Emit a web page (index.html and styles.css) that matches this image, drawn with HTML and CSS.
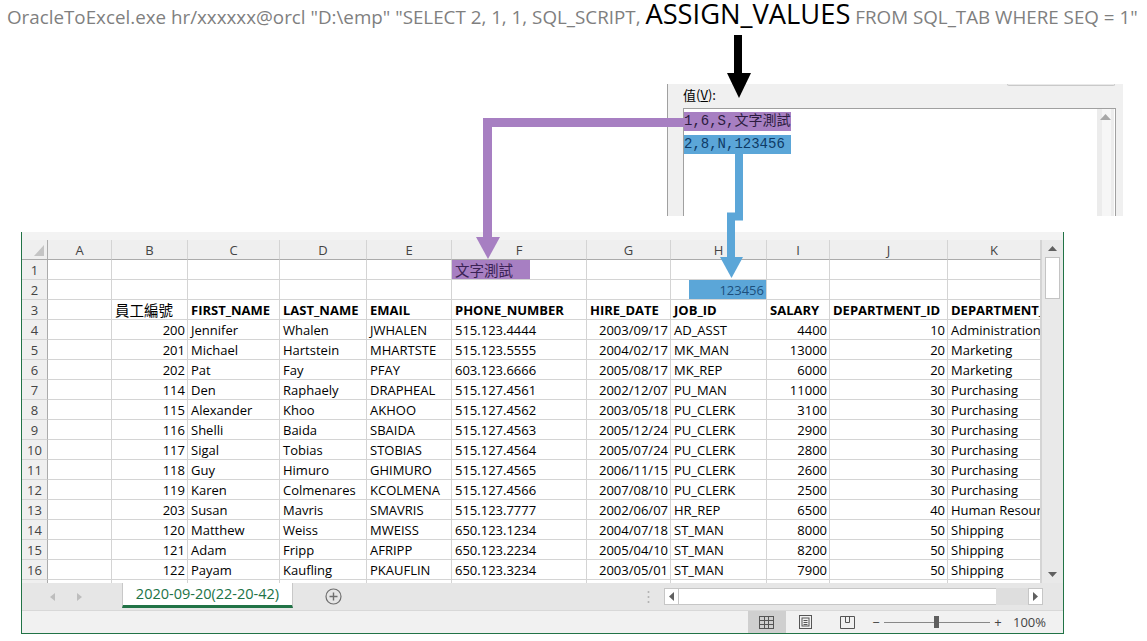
FILE: index.html
```html
<!DOCTYPE html>
<html lang="zh-Hant">
<head>
<meta charset="utf-8">
<title>OracleToExcel ASSIGN_VALUES</title>
<link rel="stylesheet" href="styles.css">
</head>
<body>
<div class="page">
  <p class="caption"><span class="cmd">OracleToExcel.exe hr/xxxxxx@orcl "D:\emp" "SELECT 2, 1, 1, SQL_SCRIPT, </span><span class="hl">ASSIGN_VALUES</span><span class="cmd"> FROM SQL_TAB WHERE SEQ = 1"</span></p>

  <div class="dialog">
    <div class="btn-stub"></div>
    <div class="dlg-label">值(<u>V</u>):</div>
    <div class="editbox">
      <div class="edit-lines">
        <div class="line line-s">1,6,S,文字測試</div>
        <div class="line line-n">2,8,N,123456</div>
      </div>
      <div class="edit-scroll">
        <svg width="11" height="6" viewBox="0 0 11 6"><polygon points="0,6 11,6 5.5,0" fill="#a8a8a8"/></svg>
      </div>
    </div>
  </div>

  <div class="sheet">
    <div class="sheet-top"></div>
    <div class="sheet-body">
      <div class="grid">
        <div class="row hdr">
          <div class="c rh corner"><svg width="10" height="11" viewBox="0 0 10 11"><polygon points="10,0 10,11 0,11" fill="#c4c4c4"/></svg></div>
          <div class="c">A</div><div class="c">B</div><div class="c">C</div><div class="c">D</div><div class="c">E</div><div class="c">F</div><div class="c">G</div><div class="c">H</div><div class="c">I</div><div class="c">J</div><div class="c">K</div>
        </div>
        <div class="row">
          <div class="c rh">1</div><div class="c"></div><div class="c"></div><div class="c"></div><div class="c"></div><div class="c"></div>
          <div class="c flush"><span class="tag-s">文字測試</span></div>
          <div class="c"></div><div class="c"></div><div class="c"></div><div class="c"></div><div class="c"></div>
        </div>
        <div class="row">
          <div class="c rh">2</div><div class="c"></div><div class="c"></div><div class="c"></div><div class="c"></div><div class="c"></div><div class="c"></div><div class="c"></div>
          <div class="c flush"><span class="tag-n">123456</span></div>
          <div class="c"></div><div class="c"></div><div class="c"></div>
        </div>
        <div class="row">
          <div class="c rh">3</div><div class="c"></div><div class="c cjk">員工編號</div><div class="c b">FIRST_NAME</div><div class="c b">LAST_NAME</div><div class="c b">EMAIL</div><div class="c b">PHONE_NUMBER</div><div class="c b">HIRE_DATE</div><div class="c b">JOB_ID</div><div class="c b">SALARY</div><div class="c b">DEPARTMENT_ID</div><div class="c b">DEPARTMENT_NAME</div>
        </div>
        <div class="row">
          <div class="c rh">4</div><div class="c"></div><div class="c n">200</div><div class="c">Jennifer</div><div class="c">Whalen</div><div class="c">JWHALEN</div><div class="c">515.123.4444</div><div class="c n">2003/09/17</div><div class="c">AD_ASST</div><div class="c n">4400</div><div class="c n">10</div><div class="c">Administration</div>
        </div>
        <div class="row">
          <div class="c rh">5</div><div class="c"></div><div class="c n">201</div><div class="c">Michael</div><div class="c">Hartstein</div><div class="c">MHARTSTE</div><div class="c">515.123.5555</div><div class="c n">2004/02/17</div><div class="c">MK_MAN</div><div class="c n">13000</div><div class="c n">20</div><div class="c">Marketing</div>
        </div>
        <div class="row">
          <div class="c rh">6</div><div class="c"></div><div class="c n">202</div><div class="c">Pat</div><div class="c">Fay</div><div class="c">PFAY</div><div class="c">603.123.6666</div><div class="c n">2005/08/17</div><div class="c">MK_REP</div><div class="c n">6000</div><div class="c n">20</div><div class="c">Marketing</div>
        </div>
        <div class="row">
          <div class="c rh">7</div><div class="c"></div><div class="c n">114</div><div class="c">Den</div><div class="c">Raphaely</div><div class="c">DRAPHEAL</div><div class="c">515.127.4561</div><div class="c n">2002/12/07</div><div class="c">PU_MAN</div><div class="c n">11000</div><div class="c n">30</div><div class="c">Purchasing</div>
        </div>
        <div class="row">
          <div class="c rh">8</div><div class="c"></div><div class="c n">115</div><div class="c">Alexander</div><div class="c">Khoo</div><div class="c">AKHOO</div><div class="c">515.127.4562</div><div class="c n">2003/05/18</div><div class="c">PU_CLERK</div><div class="c n">3100</div><div class="c n">30</div><div class="c">Purchasing</div>
        </div>
        <div class="row">
          <div class="c rh">9</div><div class="c"></div><div class="c n">116</div><div class="c">Shelli</div><div class="c">Baida</div><div class="c">SBAIDA</div><div class="c">515.127.4563</div><div class="c n">2005/12/24</div><div class="c">PU_CLERK</div><div class="c n">2900</div><div class="c n">30</div><div class="c">Purchasing</div>
        </div>
        <div class="row">
          <div class="c rh">10</div><div class="c"></div><div class="c n">117</div><div class="c">Sigal</div><div class="c">Tobias</div><div class="c">STOBIAS</div><div class="c">515.127.4564</div><div class="c n">2005/07/24</div><div class="c">PU_CLERK</div><div class="c n">2800</div><div class="c n">30</div><div class="c">Purchasing</div>
        </div>
        <div class="row">
          <div class="c rh">11</div><div class="c"></div><div class="c n">118</div><div class="c">Guy</div><div class="c">Himuro</div><div class="c">GHIMURO</div><div class="c">515.127.4565</div><div class="c n">2006/11/15</div><div class="c">PU_CLERK</div><div class="c n">2600</div><div class="c n">30</div><div class="c">Purchasing</div>
        </div>
        <div class="row">
          <div class="c rh">12</div><div class="c"></div><div class="c n">119</div><div class="c">Karen</div><div class="c">Colmenares</div><div class="c">KCOLMENA</div><div class="c">515.127.4566</div><div class="c n">2007/08/10</div><div class="c">PU_CLERK</div><div class="c n">2500</div><div class="c n">30</div><div class="c">Purchasing</div>
        </div>
        <div class="row">
          <div class="c rh">13</div><div class="c"></div><div class="c n">203</div><div class="c">Susan</div><div class="c">Mavris</div><div class="c">SMAVRIS</div><div class="c">515.123.7777</div><div class="c n">2002/06/07</div><div class="c">HR_REP</div><div class="c n">6500</div><div class="c n">40</div><div class="c">Human Resources</div>
        </div>
        <div class="row">
          <div class="c rh">14</div><div class="c"></div><div class="c n">120</div><div class="c">Matthew</div><div class="c">Weiss</div><div class="c">MWEISS</div><div class="c">650.123.1234</div><div class="c n">2004/07/18</div><div class="c">ST_MAN</div><div class="c n">8000</div><div class="c n">50</div><div class="c">Shipping</div>
        </div>
        <div class="row">
          <div class="c rh">15</div><div class="c"></div><div class="c n">121</div><div class="c">Adam</div><div class="c">Fripp</div><div class="c">AFRIPP</div><div class="c">650.123.2234</div><div class="c n">2005/04/10</div><div class="c">ST_MAN</div><div class="c n">8200</div><div class="c n">50</div><div class="c">Shipping</div>
        </div>
        <div class="row">
          <div class="c rh">16</div><div class="c"></div><div class="c n">122</div><div class="c">Payam</div><div class="c">Kaufling</div><div class="c">PKAUFLIN</div><div class="c">650.123.3234</div><div class="c n">2003/05/01</div><div class="c">ST_MAN</div><div class="c n">7900</div><div class="c n">50</div><div class="c">Shipping</div>
        </div>
        <div class="row">
          <div class="c rh">17</div><div class="c"></div><div class="c"></div><div class="c"></div><div class="c"></div><div class="c"></div><div class="c"></div><div class="c"></div><div class="c"></div><div class="c"></div><div class="c"></div><div class="c"></div>
        </div>
      </div>
      <div class="vscroll">
        <div class="vs-btn"><svg width="9" height="5" viewBox="0 0 9 5"><polygon points="0,5 9,5 4.5,0" fill="#606060"/></svg></div>
        <div class="vs-thumb"></div>
        <div class="vs-track"></div>
        <div class="vs-btn"><svg width="9" height="5" viewBox="0 0 9 5"><polygon points="0,0 9,0 4.5,5" fill="#606060"/></svg></div>
      </div>
    </div>

    <div class="tabbar">
      <div class="tab-nav">
        <svg width="5" height="8" viewBox="0 0 5 8"><polygon points="5,0 5,8 0,4" fill="#bdbdbd"/></svg>
        <svg width="5" height="8" viewBox="0 0 5 8"><polygon points="0,0 0,8 5,4" fill="#bdbdbd"/></svg>
      </div>
      <div class="tab">2020-09-20(22-20-42)</div>
      <div class="add-sheet">
        <svg width="17" height="17" viewBox="0 0 17 17"><circle cx="8.5" cy="8.5" r="7.5" fill="none" stroke="#6f6f6f" stroke-width="1.2"/><path d="M8.5 4.5V12.5M4.5 8.5H12.5" stroke="#6f6f6f" stroke-width="1.4"/></svg>
      </div>
      <div class="splitter">
        <svg width="3" height="14" viewBox="0 0 3 14"><circle cx="1.5" cy="2" r="1" fill="#b0b0b0"/><circle cx="1.5" cy="7" r="1" fill="#b0b0b0"/><circle cx="1.5" cy="12" r="1" fill="#b0b0b0"/></svg>
      </div>
      <div class="hscroll">
        <div class="hs-btn"><svg width="5" height="9" viewBox="0 0 5 9"><polygon points="5,0 5,9 0,4.5" fill="#606060"/></svg></div>
        <div class="hs-thumb"></div>
        <div class="hs-track"></div>
        <div class="hs-btn"><svg width="5" height="9" viewBox="0 0 5 9"><polygon points="0,0 0,9 5,4.5" fill="#606060"/></svg></div>
      </div>
    </div>

    <div class="statusbar">
      <div class="vbtn active">
        <svg width="15" height="13" viewBox="0 0 15 13"><rect x="0.5" y="0.5" width="14" height="12" fill="none" stroke="#555"/><path d="M5.5 0.5V12.5M9.5 0.5V12.5M0.5 4.5H14.5M0.5 8.5H14.5" stroke="#555"/></svg>
      </div>
      <div class="vbtn">
        <svg width="13" height="14" viewBox="0 0 13 14"><rect x="0.5" y="0.5" width="12" height="13" fill="none" stroke="#555"/><rect x="3" y="3" width="7" height="8" fill="none" stroke="#555"/><path d="M4.5 5.5H8.5M4.5 7.5H8.5M4.5 9.5H8.5" stroke="#555"/></svg>
      </div>
      <div class="vbtn wide">
        <svg width="15" height="13" viewBox="0 0 15 13"><path d="M0.5 0.5H14.5V12.5H0.5Z" fill="none" stroke="#555"/><path d="M5.5 0.5V6.5H9.5V0.5" fill="none" stroke="#555"/></svg>
      </div>
      <div class="zoom-minus">−</div>
      <div class="slider"><div class="slider-thumb"></div></div>
      <div class="zoom-plus">+</div>
      <div class="zoom-pct">100%</div>
    </div>
  </div>

  <svg class="arrows" width="1147" height="641" viewBox="0 0 1147 641">
    <rect x="734" y="35" width="8" height="39" fill="#000"/>
    <polygon points="727,73 751,73 739,98" fill="#000"/>
    <path d="M684 122.5H487.5V238" fill="none" stroke="#a77fc2" stroke-width="9"/>
    <polygon points="476,237 500,237 488,259" fill="#a77fc2"/>
    <path d="M739 154V216.5H731V258" fill="none" stroke="#5ba6d8" stroke-width="8"/>
    <polygon points="720,257 743,257 731.5,278" fill="#5ba6d8"/>
  </svg>
</div>
</body>
</html>
```

FILE: styles.css
```css
* { box-sizing: border-box; }

body {
  margin: 0;
  background: #fff;
  font-family: "Open Sans", "Noto Sans CJK TC", sans-serif;
}

.page {
  position: relative;
  width: 1147px;
  height: 641px;
  overflow: hidden;
}

/* command line caption */
.caption {
  margin: 0;
  padding-left: 7px;
  height: 31px;
  line-height: 28px;
  font-size: 18.8px;
  color: #7f7f7f;
  white-space: nowrap;
}
.caption .hl {
  font-size: 27.3px;
  color: #000;
}

/* dialog fragment */
.dialog {
  margin: 53px 0 0 667px;
  width: 456px;
  height: 132px;
  background: #f0f0f0;
  border-left: 1px solid #a0a0a0;
  display: flex;
  flex-direction: column;
}
.btn-stub {
  align-self: flex-end;
  margin-right: 8px;
  width: 108px;
  height: 2px;
  border: 1px solid #c9c9c9;
  border-top: none;
  border-radius: 0 0 3px 3px;
  background: #e9e9e9;
}
.dlg-label {
  margin: 1px 0 0 15px;
  height: 16px;
  line-height: 16px;
  font-size: 13px;
  font-family: "Noto Sans CJK TC", sans-serif;
  color: #000;
}
.editbox {
  margin: 5px 0 0 15px;
  width: 433px;
  flex: 1;
  background: #fff;
  border: 1px solid #a0a0a0;
  border-bottom: none;
  display: flex;
}
.edit-lines {
  flex: 1;
  padding-top: 3px;
  display: flex;
  flex-direction: column;
  gap: 4px;
}
.line {
  width: 107px;
  height: 19px;
  line-height: 19px;
  font-size: 14px;
  font-family: "Liberation Mono", "Noto Sans CJK TC", monospace;
  white-space: nowrap;
}
.line-s { background: #a77fc2; color: #2c1c40; }
.line-n { background: #5ba6d8; color: #0e3a66; }
.edit-scroll {
  width: 17px;
  margin-right: 1px;
  background: linear-gradient(90deg, #ececec 0 30%, #f6f6f6 30% 80%, #ececec 80%);
  display: flex;
  justify-content: center;
  padding-top: 5px;
}

/* spreadsheet window */
.sheet {
  margin: 16px 0 0 21px;
  width: 1043px;
  border-left: 1px solid #217346;
  border-right: 1px solid #217346;
  border-bottom: 1px solid #217346;
}
.sheet-top {
  height: 8px;
  background: #f3f3f3;
}
.sheet-body {
  display: flex;
  height: 343px;
  overflow: hidden;
}
.grid {
  width: 1019px;
  flex: none;
}
.row {
  display: grid;
  grid-template-columns: 26px 64px 76px 92px 87px 85px 135px 84px 96px 63px 118px 93px;
  height: 20px;
}
.c {
  border-right: 1px solid #d4d4d4;
  border-bottom: 1px solid #d4d4d4;
  padding: 1px 3px 0;
  line-height: 18px;
  font-size: 13px;
  color: #000;
  white-space: nowrap;
  overflow: hidden;
}
.n { text-align: right; padding-right: 2px; }
.b { font-weight: 700; }
.cjk { font-size: 14.5px; font-family: "Noto Sans CJK TC", sans-serif; padding-left: 3px; }
.rh {
  background: #efefef;
  border-right-color: #ababab;
  text-align: center;
  color: #444;
  padding: 1px 0 0;
}
.hdr .c {
  background: #efefef;
  border-bottom-color: #ababab;
  text-align: center;
  color: #444;
}
.hdr .corner {
  border-right-color: #ababab;
  display: flex;
  justify-content: flex-end;
  align-items: flex-end;
  padding: 0 3px 3px 0;
}
.flush { padding: 0; }
.tag-s {
  display: block;
  width: 78px;
  height: 19px;
  padding: 1px 0 0 3px;
  background: #a77fc2;
  color: #3a2254;
  font-size: 14.5px;
  line-height: 18px;
  font-family: "Noto Sans CJK TC", sans-serif;
}
.tag-n {
  display: block;
  margin-left: 18px;
  height: 19px;
  padding: 1px 2px 0 0;
  background: #5ba6d8;
  color: #1d4f7c;
  text-align: right;
}

.vscroll {
  flex: 1;
  background: #e9e9e9;
  border-left: 1px solid #d4d4d4;
  display: flex;
  flex-direction: column;
  align-items: center;
}
.vs-btn {
  width: 100%;
  height: 17px;
  display: flex;
  align-items: center;
  justify-content: center;
  flex: none;
}
.vs-thumb {
  width: 15px;
  height: 42px;
  flex: none;
  background: #fff;
  border: 1px solid #c4c4c4;
}
.vs-track { flex: 1; }

/* sheet tabs */
.tabbar {
  height: 27px;
  background: #e6e6e6;
  display: flex;
  align-items: stretch;
}
.tab-nav {
  width: 100px;
  display: flex;
  align-items: center;
  gap: 22px;
  padding-left: 28px;
}
.tab {
  width: 171px;
  background: #fff;
  border-left: 1px solid #c8c8c8;
  border-right: 1px solid #c8c8c8;
  border-bottom: 3px solid #217346;
  margin-bottom: 2px;
  color: #217346;
  font-size: 14.5px;
  line-height: 22px;
  text-align: center;
}
.add-sheet {
  margin-left: 32px;
  display: flex;
  align-items: center;
}
.splitter {
  margin-left: 305px;
  display: flex;
  align-items: center;
}
.hscroll {
  margin-left: 14px;
  width: 379px;
  height: 17px;
  align-self: center;
  display: flex;
}
.hs-btn {
  width: 15px;
  background: #fff;
  border: 1px solid #c6c6c6;
  display: flex;
  align-items: center;
  justify-content: center;
  flex: none;
}
.hs-thumb {
  width: 317px;
  background: #fff;
  border-top: 1px solid #c6c6c6;
  border-bottom: 1px solid #c6c6c6;
  flex: none;
}
.hs-track {
  flex: 1;
  background: #dedede;
}

/* status bar */
.statusbar {
  height: 23px;
  background: #f1f1f1;
  border-top: 1px solid #d8d8d8;
  display: flex;
  align-items: stretch;
  justify-content: flex-end;
  padding-right: 17px;
  font-size: 13px;
  color: #444;
}
.vbtn {
  width: 40px;
  display: flex;
  align-items: center;
  justify-content: center;
}
.vbtn.active { width: 38px; background: #cfcfcf; }
.vbtn.wide { width: 44px; }
.zoom-minus, .zoom-plus {
  width: 12px;
  line-height: 22px;
  text-align: center;
}
.slider {
  width: 106px;
  margin: 0 2px;
  position: relative;
  background: linear-gradient(#888, #888) center / 100% 1px no-repeat;
}
.slider-thumb {
  position: absolute;
  left: 50px;
  top: 5px;
  width: 5px;
  height: 12px;
  background: #5f5f5f;
}
.zoom-pct {
  margin-left: 9px;
  line-height: 22px;
}

/* annotation arrows drawn over the composition */
.arrows {
  position: absolute;
  left: 0;
  top: 0;
  pointer-events: none;
}
```
